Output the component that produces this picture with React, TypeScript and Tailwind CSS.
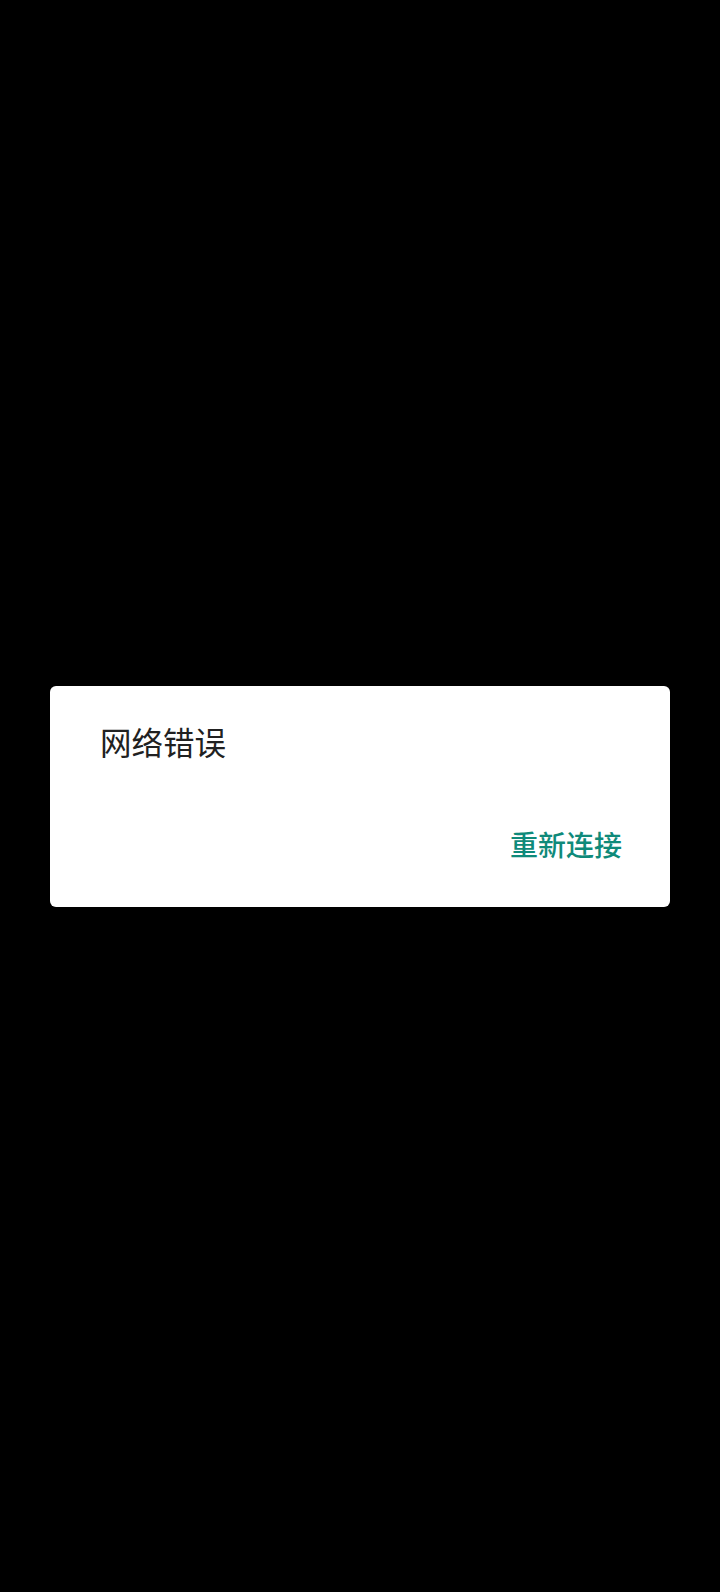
import React from 'react';

export default function App() {
  return (
    <div className="flex h-[1592px] w-full items-center justify-center bg-black px-[50px] font-['Noto_Sans','Noto_Sans_CJK_SC',sans-serif]">
      <div className="flex h-[221px] w-full flex-col rounded-[6px] bg-white">
        {/* Title */}
        <div className="pl-[50px] pt-[39px] text-[31.5px] leading-[36px] text-[#212121]">网络错误</div>

        {/* Actions */}
        <div className="mt-auto flex justify-end pb-[46px] pr-[48px]">
          <button className="text-[28px] font-medium leading-[32px] text-[#0f8a7a]">重新连接</button>
        </div>
      </div>
    </div>
  );
}
